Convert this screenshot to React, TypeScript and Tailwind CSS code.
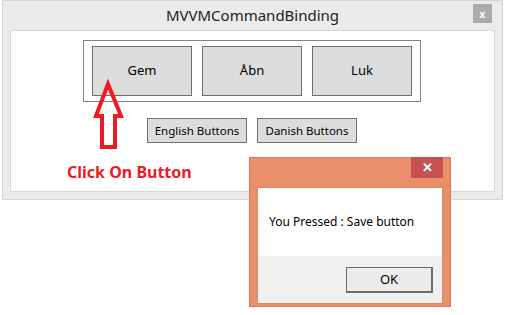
import React from "react";

const font = { fontFamily: '"Noto Sans", "Open Sans", sans-serif' };

const BigButton: React.FC<{ label: string }> = ({ label }) => (
  <div className="w-[100px] h-[50px] flex items-center justify-center border border-[#707070] bg-[#dddddd] text-[13px] text-black">
    {label}
  </div>
);

const SmallButton: React.FC<{ label: string }> = ({ label }) => (
  <div className="w-[100px] h-[25px] flex items-center justify-center border border-[#707070] bg-[#dddddd] text-[11.5px] text-black">
    {label}
  </div>
);

const UpArrow = () => (
  <svg
    className="absolute left-[90px] top-[78px]"
    width="36"
    height="76"
    viewBox="90 78 36 76"
  >
    <path
      d="M108 84 L96 116 L102 116 L102 147 L115 147 L115 116 L121 116 Z"
      fill="none"
      stroke="#ed1c24"
      strokeWidth="4"
      strokeLinejoin="miter"
    />
  </svg>
);

const MessageBox = () => (
  <div className="absolute left-[249px] top-[157px] w-[202px] h-[150px] bg-[#e9906a] border border-[#d07d5a] flex flex-col px-[7px] pb-[2px]">
    <div className="h-[29px] flex justify-end items-start">
      <div className="w-[32px] h-[21px] -mt-px bg-[#c75050] flex items-center justify-center text-white text-[13px] font-bold leading-none">
        ✕
      </div>
    </div>
    <div className="flex-1 flex flex-col border border-[#d98a66]">
      <div className="h-[68px] bg-white flex items-center pl-[11px] text-[12px] text-black">
        You Pressed : Save button
      </div>
      <div className="flex-1 bg-[#f0f0f0] flex justify-end items-start pt-[11px] pr-[9px]">
        <div className="w-[87px] h-[26px] flex items-center justify-center bg-[#ececec] border border-[#6d6d6d] border-r-2 border-b-2 text-[13px] text-black">
          OK
        </div>
      </div>
    </div>
  </div>
);

export default function App() {
  return (
    <div className="relative w-[505px] h-[315px] bg-white overflow-hidden" style={font}>
      <div className="ml-[2px] w-[501px] h-[200px] border border-[#d6d6d6] bg-[#ebebeb] px-[7px] pb-[7px] flex flex-col">
        <div className="h-[29px] grid grid-cols-[1fr_auto_1fr] items-center">
          <div />
          <div className="text-[15px] text-[#222222]">MVVMCommandBinding</div>
          <div className="flex justify-end pr-[3px]">
            <div className="w-[19px] h-[19px] -mt-[4px] bg-[#ababab] flex items-center justify-center text-white text-[10px] font-bold leading-none">
              x
            </div>
          </div>
        </div>
        <div className="flex-1 bg-white border border-[#d9d9d9] flex flex-col pt-[9px]">
          <div className="self-start ml-[72px] flex gap-[10px] border border-[#828282] px-[8px] py-[5px]">
            <BigButton label="Gem" />
            <BigButton label="Åbn" />
            <BigButton label="Luk" />
          </div>
          <div className="self-start ml-[136px] flex gap-[10px] mt-[16px]">
            <SmallButton label="English Buttons" />
            <SmallButton label="Danish Buttons" />
          </div>
          <div className="self-start ml-[56px] mt-[19px] text-[16px] font-bold text-[#ed1c24] leading-[20px]">
            Click On Button
          </div>
        </div>
      </div>
      <UpArrow />
      <MessageBox />
    </div>
  );
}
